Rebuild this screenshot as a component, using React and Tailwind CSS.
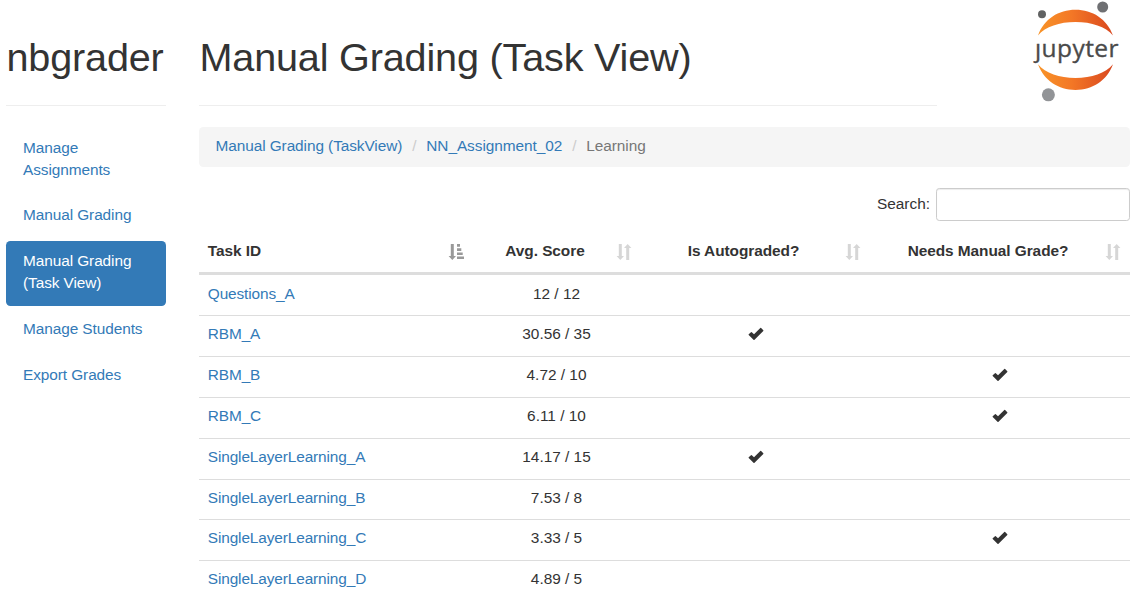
import React from 'react';

const NAV = [
  { label: 'Manage Assignments' },
  { label: 'Manual Grading' },
  { label: 'Manual Grading (Task View)', active: true },
  { label: 'Manage Students' },
  { label: 'Export Grades' },
];

const TASKS = [
  { id: 'Questions_A', score: '12 / 12' },
  { id: 'RBM_A', score: '30.56 / 35', auto: true },
  { id: 'RBM_B', score: '4.72 / 10', manual: true },
  { id: 'RBM_C', score: '6.11 / 10', manual: true },
  { id: 'SingleLayerLearning_A', score: '14.17 / 15', auto: true },
  { id: 'SingleLayerLearning_B', score: '7.53 / 8' },
  { id: 'SingleLayerLearning_C', score: '3.33 / 5', manual: true },
  { id: 'SingleLayerLearning_D', score: '4.89 / 5' },
];

const COLS = 'grid grid-cols-[274px_168px_229px_260px]';

function JupyterLogo() {
  return (
    <svg width="92" height="104" viewBox="0 0 92 104" className="block">
      <defs>
        <linearGradient id="flame" x1="6" x2="81" y1="0" y2="0" gradientUnits="userSpaceOnUse">
          <stop offset="0" stopColor="#f89428" />
          <stop offset="0.45" stopColor="#f37726" />
          <stop offset="1" stopColor="#d9481f" />
        </linearGradient>
        {/* The wordmark's j has no dot. */}
        <clipPath id="wordmark">
          <path d="M0 43H13V30H92V70H0Z" />
        </clipPath>
      </defs>
      <path d="M6 35.5C12 19 26.500 9.800 43.500 9.800S75 19 81 35.500C73.500 26.500 59.500 22 43.500 22S13.500 26.500 6 35.500Z" fill="url(#flame)" />
      <path d="M6 64.200C12 80.500 26.500 89.900 43.500 89.900S75 80.500 81 64.200C73.500 73.300 59.500 77.900 43.500 77.900S13.500 73.300 6 64.200Z" fill="url(#flame)" />
      <circle cx="10" cy="14.300" r="4" fill="#616262" />
      <circle cx="70.700" cy="7" r="5.500" fill="#6f7073" />
      <circle cx="16.400" cy="94.800" r="6.500" fill="#929497" />
      <g clipPath="url(#wordmark)">
        <text x="3" y="57" fontSize="24.500" fill="#4a4a4a" stroke="#4a4a4a" strokeWidth="0.350" textLength="83.500" lengthAdjust="spacing" className="font-['Open_Sans','Noto_Sans',sans-serif]">jupyter</text>
      </g>
    </svg>
  );
}

function SortIcon() {
  return (
    <svg width="16" height="16" viewBox="0 0 16 16" className="block" fill="#d6d6d6">
      <path d="M2.800 0H5.800V12H8L4.300 16L.6 12H2.800Z" />
      <path d="M10.200 16H13.200V4H15.400L11.700 0L8 4H10.200Z" />
    </svg>
  );
}

function SortedIcon() {
  return (
    <svg width="17" height="16" viewBox="0 0 17 16" className="block" fill="#999999">
      <path d="M2.800 0H5.800V12H8L4.300 16L.6 12H2.800Z" />
      <path d="M9 0H12V2.700H9ZM9 4.200H13.300V6.900H9ZM9 8.400H14.700V11.100H9ZM9 12.400H16V15.100H9Z" />
    </svg>
  );
}

function Check() {
  return (
    <svg width="16" height="14" viewBox="0 0 16 14" className="block" fill="#333333">
      <path d="M.7 7.300L3 5.200Q3.400 4.900 3.800 5.200L6 7.300L12.300 1Q12.700.7 13.100 1L15.300 3.200Q15.600 3.500 15.300 3.900L6.500 12.700Q6 13.100 5.500 12.700L.7 8.100Q.4 7.700.7 7.300Z" />
    </svg>
  );
}

function HeadCell({ children, center, sorted }) {
  return (
    <div className="flex items-start pl-[8.800px] pr-[8.800px] pt-[9px]">
      <div className={center ? 'w-0 grow whitespace-nowrap pr-[8px] text-center' : 'w-0 grow whitespace-nowrap'}>{children}</div>
      <div className={sorted ? '-mr-px mt-[4px]' : 'mt-[4px]'}>{sorted ? <SortedIcon /> : <SortIcon />}</div>
    </div>
  );
}

export default function App() {
  return (
    <div className="flex h-[603px] w-[1144px] overflow-hidden bg-white pl-[6px] font-['Liberation_Sans',Arial,sans-serif] text-[15.400px] leading-[22px] text-[#333]">
      <aside className="w-[160px] shrink-0">
        <div className="h-[106px] border-b border-[#eee] pt-[35px]">
          <h1 className="whitespace-nowrap pl-[0.500px] text-[39.600px] leading-[44px] tracking-[-0.170px]">nbgrader</h1>
        </div>
        <nav className="mt-[22px] flex flex-col gap-[2px] tracking-[-0.080px]">
          {NAV.map((n, i) => (
            <a
              key={n.label}
              className={
                n.active
                  ? 'mb-px rounded-[4.400px] bg-[#337ab7] px-[17px] pb-[12px] pt-[9px] text-white'
                  : i === 0
                    ? 'px-[17px] pb-[12px] pt-[9px] text-[#337ab7]'
                    : 'px-[17px] pb-[13px] pt-[9px] text-[#337ab7]'
              }
            >
              {n.label}
            </a>
          ))}
        </nav>
      </aside>
      <main className="ml-[33px] w-[931px] shrink-0">
        <header className="flex h-[106px] justify-between">
          <div className="w-[738px] border-b border-[#eee] pt-[35px]">
            <h1 className="whitespace-nowrap pl-[0.500px] text-[39.600px] leading-[44px] tracking-[-0.170px]">Manual Grading (Task View)</h1>
          </div>
          <div className="-mr-[2px] w-[100px]"><JupyterLogo /></div>
        </header>
        <div className="mt-[21px] flex h-[40px] rounded-[4.400px] bg-[#f5f5f5] px-[16.500px] pt-[8px] tracking-[-0.080px]">
          <span className="text-[#337ab7]">Manual Grading (TaskView)</span>
          <span className="w-[24px] text-center text-[#ccc]">/</span>
          <span className="tracking-[-0.050px] text-[#337ab7]">NN_Assignment_02</span>
          <span className="w-[24px] text-center text-[#ccc]">/</span>
          <span className="text-[#777]">Learning</span>
        </div>
        <div className="mt-[21px] flex justify-end gap-[6px]">
          <label className="pt-[5px]">Search:</label>
          <input className="h-[33px] w-[194px] rounded-[3.300px] border border-[#ccc] bg-white shadow-[inset_0_1px_1px_rgba(0,0,0,0.075)]" />
        </div>
        <div className={`${COLS} mb-[0.600px] mt-[10px] h-[44px] border-b-[3px] border-[#ddd] font-bold tracking-[-0.050px]`}>
          <HeadCell sorted>Task ID</HeadCell>
          <HeadCell center>Avg. Score</HeadCell>
          <HeadCell center>Is Autograded?</HeadCell>
          <HeadCell center>Needs Manual Grade?</HeadCell>
        </div>
        {TASKS.map((t) => (
          <div key={t.id} className={`${COLS} h-[40.800px] border-b border-[#ddd] pt-[7px] last:border-b-0`}>
            <a className="pl-[8.800px] tracking-[-0.120px] text-[#337ab7]">{t.id}</a>
            <div className="pr-px text-center">{t.score}</div>
            <div className="flex justify-center pt-[4px]">{t.auto && <Check />}</div>
            <div className="flex justify-center pt-[4px]">{t.manual && <Check />}</div>
          </div>
        ))}
      </main>
    </div>
  );
}
